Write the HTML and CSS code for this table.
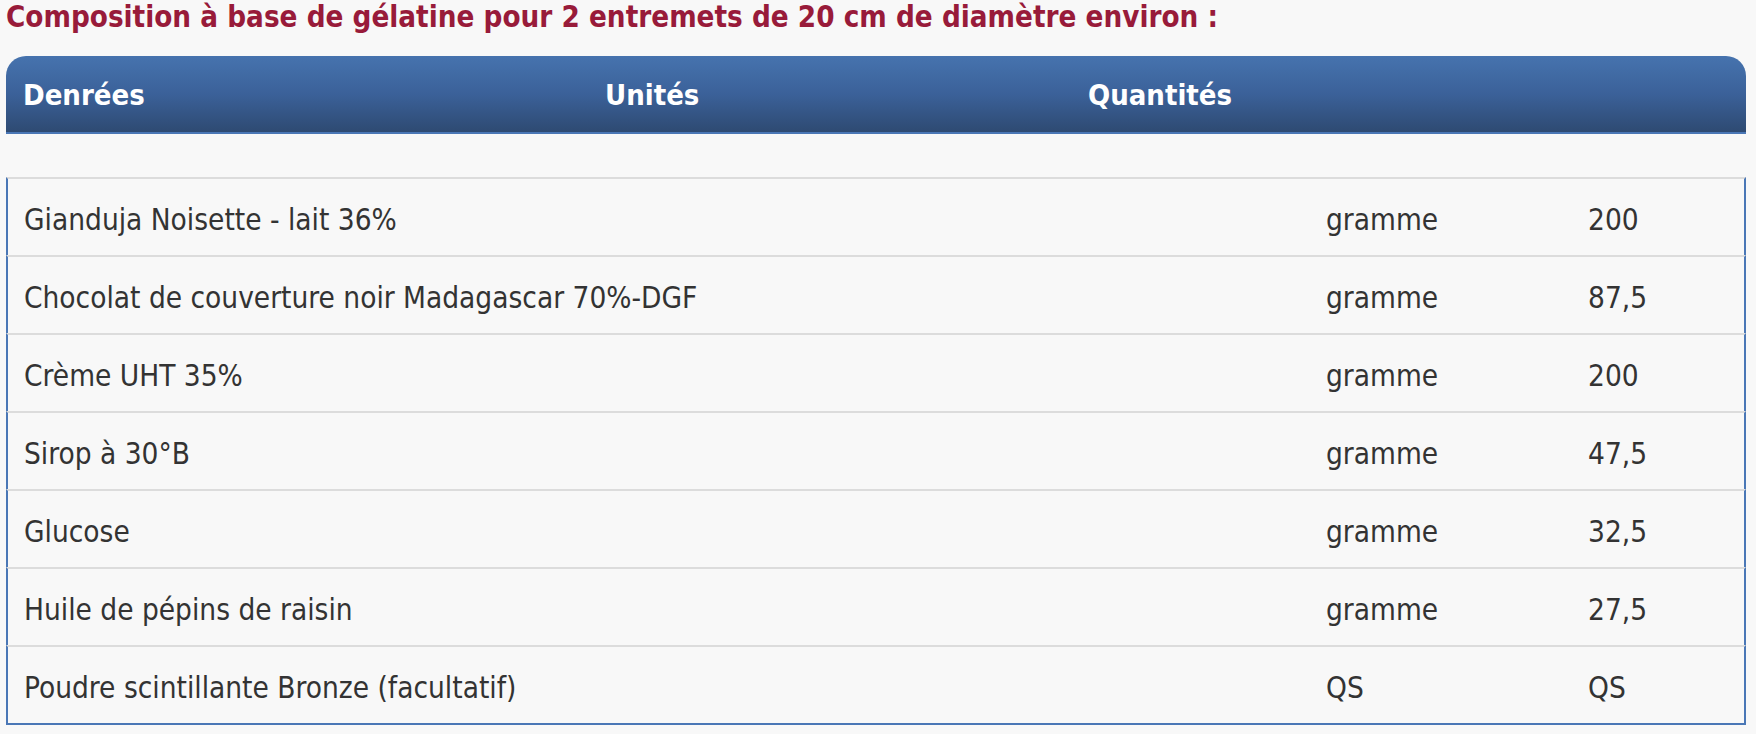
FILE: index.html
```html
<!DOCTYPE html>
<html lang="fr">
<head>
<meta charset="utf-8">
<title>Composition</title>
<link rel="stylesheet" href="styles.css">
</head>
<body>
<div class="page">
  <h2 class="title">Composition à base de gélatine pour 2 entremets de 20 cm de diamètre environ :</h2>
  <div class="thead">
    <div class="th">Denrées</div>
    <div class="th">Unités</div>
    <div class="th">Quantités</div>
  </div>
  <div class="spacer"></div>
  <table class="grid">
    <colgroup><col class="c1"><col class="c2"><col class="c3"></colgroup>
    <tbody>
      <tr><td>Gianduja Noisette - lait 36%</td><td>gramme</td><td>200</td></tr>
      <tr><td>Chocolat de couverture noir Madagascar 70%-DGF</td><td>gramme</td><td>87,5</td></tr>
      <tr><td>Crème UHT 35%</td><td>gramme</td><td>200</td></tr>
      <tr><td>Sirop à 30°B</td><td>gramme</td><td>47,5</td></tr>
      <tr><td>Glucose</td><td>gramme</td><td>32,5</td></tr>
      <tr><td>Huile de pépins de raisin</td><td>gramme</td><td>27,5</td></tr>
      <tr><td>Poudre scintillante Bronze (facultatif)</td><td>QS</td><td>QS</td></tr>
    </tbody>
  </table>
</div>
</body>
</html>
```
FILE: styles.css
```css
html, body {
  margin: 0;
  padding: 0;
  background: #f8f8f8;
}
.page {
  padding: 0 10px 0 6px;
  font-family: "DejaVu Sans Condensed", "DejaVu Sans", sans-serif;
}
.title {
  margin: 0;
  font-size: 29.3px;
  line-height: 34px;
  font-weight: bold;
  color: #981b3a;
  white-space: nowrap;
}
.thead {
  margin-top: 22px;
  height: 76px;
  display: grid;
  grid-template-columns: 582px 483px 1fr;
  background: linear-gradient(to bottom, #4673ae 0%, #3b6199 50%, #2e4a72 100%);
  border-radius: 20px 20px 0 0;
  border-bottom: 2px solid #4a77b6;
}
.th {
  padding: 22px 17px 0;
  font-size: 29px;
  line-height: 34px;
  font-weight: bold;
  color: #ffffff;
}
.spacer {
  height: 43px;
}
.grid {
  width: 100%;
  table-layout: fixed;
  border-collapse: separate;
  border-spacing: 0;
  font-size: 29.5px;
  line-height: 34px;
  color: #333333;
}
.c2 { width: 262px; }
.c3 { width: 174px; }
.grid td {
  padding: 24px 16px 18px;
  border-top: 2px solid #dcdcdc;
  white-space: nowrap;
  vertical-align: top;
}
.grid td:first-child {
  border-left: 2px solid #4a77b6;
}
.grid td:last-child {
  border-right: 2px solid #4a77b6;
}
.grid tr:last-child td {
  border-bottom: 2px solid #4a77b6;
}
```
